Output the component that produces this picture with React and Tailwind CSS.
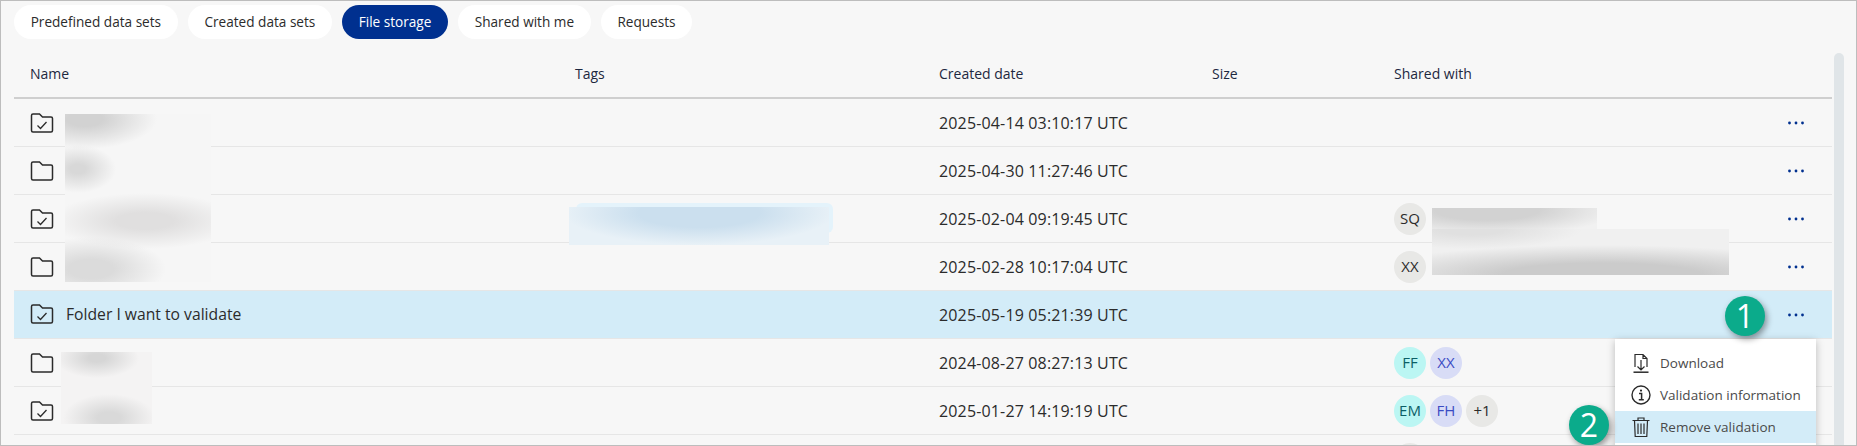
const tabs = ["Predefined data sets", "Created data sets", "File storage", "Shared with me", "Requests"];

const rows = [
  { folder: "check", date: "2025-04-14 03:10:17 UTC" },
  { folder: "plain", date: "2025-04-30 11:27:46 UTC" },
  { folder: "check", date: "2025-02-04 09:19:45 UTC", users: [["SQ", "gray"]] },
  { folder: "plain", date: "2025-02-28 10:17:04 UTC", users: [["XX", "gray"]] },
  { folder: "check", name: "Folder I want to validate", date: "2025-05-19 05:21:39 UTC", active: true },
  { folder: "plain", date: "2024-08-27 08:27:13 UTC", users: [["FF", "teal"], ["XX", "violet"]] },
  { folder: "check", date: "2025-01-27 14:19:19 UTC", users: [["EM", "teal"], ["FH", "violet"], ["+1", "gray"]] },
  { folder: "plain", date: "", users: [["", "gray"]] },
];

const avatarColors = {
  gray: "bg-[#e8e8e6] text-[#2b2b2b]",
  teal: "bg-[#bbf6f3] text-[#0b5f66]",
  violet: "bg-[#d8dcf6] text-[#3a4bc4]",
};

const cols = "grid grid-cols-[545px_364px_273px_182px_1fr]";

function FolderIcon({ type }) {
  return (
    <svg width="24" height="20" viewBox="0 0 24 20" fill="none" stroke="#2b2b2b" strokeWidth="1.5" className="shrink-0">
      <path d="M3 1h6.5l3 3h8.5a1.5 1.5 0 0 1 1.5 1.5v12a1.5 1.5 0 0 1-1.5 1.5h-18a1.5 1.5 0 0 1-1.5-1.5v-15a1.5 1.5 0 0 1 1.5-1.5z" />
      {type === "check" && <path d="M7.5 12.5l3 3 6-6.5" strokeWidth="1.3" />}
    </svg>
  );
}

function Dots() {
  return (
    <svg width="16" height="4" viewBox="0 0 16 4" fill="#00308f">
      <circle cx="1.5" cy="2" r="1.4" />
      <circle cx="8" cy="2" r="1.4" />
      <circle cx="14.5" cy="2" r="1.4" />
    </svg>
  );
}

function Row({ row }) {
  return (
    <div className={`${cols} h-12 shrink-0 items-center border-b border-[#e6e6e6] text-[#2b2b2b] ${row.active ? "bg-[#d3ecf8]" : ""}`}>
      <div className="flex items-center gap-3 pl-4">
        <FolderIcon type={row.folder} />
        {row.name && <span className="text-[15.7px]">{row.name}</span>}
      </div>
      <div />
      <div className="pl-4 text-[16px] tracking-[0.15px]">{row.date}</div>
      <div />
      <div className="flex items-center justify-between pl-4 pr-7">
        <div className="flex gap-1">
          {(row.users || []).map(([label, color], i) => (
            <span key={i} className={`flex h-8 w-8 items-center justify-center rounded-full text-[15px] ${avatarColors[color]}`}>{label}</span>
          ))}
        </div>
        <Dots />
      </div>
    </div>
  );
}

function Callout({ className, children }) {
  return (
    <div className={`absolute flex h-10 w-10 items-center justify-center rounded-full bg-[#0bab8b] text-[32px] text-white shadow-[2px_3px_6px_rgba(0,0,0,0.4)] ${className}`}>
      {children}
    </div>
  );
}

function MenuItem({ icon, label, active }) {
  return (
    <div className={`flex h-8 items-center gap-[9px] pl-4 text-[13.5px] text-[#4a4a4a] ${active ? "bg-[#d3ecf8]" : ""}`}>
      <span className="flex w-[20px] justify-center">{icon}</span>
      {label}
    </div>
  );
}

export default function App() {
  return (
    <div className="relative flex h-[446px] gap-[2px] overflow-hidden border border-[#bdbdbd] bg-[#f7f7f7] pl-[13px] pr-3 pt-1 font-['Open_Sans',sans-serif]">
      <div className="min-w-0 flex-1">
        <div className="flex gap-[10px]">
          {tabs.map((t) => (
            <div key={t} className={`flex h-[34px] items-center rounded-full px-[16.7px] text-[13.6px] ${t === "File storage" ? "bg-[#00308f] text-white" : "bg-white text-[#2b2b2b]"}`}>
              {t}
            </div>
          ))}
        </div>

        <div className={`${cols} mt-[11px] h-[49px] items-center border-b-2 border-[#cfcfcf] text-[14px] text-[#1d2840]`}>
          <div className="pl-4">Name</div>
          <div className="pl-4">Tags</div>
          <div className="pl-4">Created date</div>
          <div className="pl-4">Size</div>
          <div className="pl-4">Shared with</div>
        </div>

        {rows.map((r, i) => (
          <Row key={i} row={r} />
        ))}
      </div>

      <div className="mt-12 w-[10px] rounded-t-full bg-[#e0e5e8]" />

      {/* blurred-out bits of the screenshot, they sit over the table */}
      <div className="absolute left-[64px] top-[113px] h-[168px] w-[146px] bg-[#f6f6f6] bg-[radial-gradient(ellipse_72px_30px_at_20px_5px,#d2d2d2_25%,#d2d2d200),radial-gradient(ellipse_38px_24px_at_13px_55px,#d8d8d8_20%,#d8d8d800),radial-gradient(ellipse_95px_28px_at_80px_107px,#e0dfdf_30%,#e0dfdf00),radial-gradient(ellipse_75px_32px_at_26px_155px,#dbdbdb_30%,#dbdbdb00)]" />
      <div className="absolute left-[60px] top-[351px] h-[72px] w-[91px] bg-[#f4f3f3] bg-[radial-gradient(ellipse_42px_20px_at_36px_6px,#d6d6d6_20%,#d6d6d600),radial-gradient(ellipse_46px_24px_at_48px_66px,#d9d9d9_25%,#d9d9d900)]" />
      <div className="absolute left-[575px] top-[202px] h-[30px] w-[257px] rounded-md bg-[#e4f3fb]" />
      <div className="absolute left-[568px] top-[206px] h-[38px] w-[260px] bg-[#e8f1f7] bg-[radial-gradient(ellipse_135px_32px_at_130px_6px,#cbdfee_45%,#cbdfee00)]" />
      <div className="absolute left-[1431px] top-[207px] h-[21px] w-[165px] bg-[#f1f1f1] bg-[radial-gradient(ellipse_130px_26px_at_55px_2px,#d2d2d2_40%,#d2d2d200)]" />
      <div className="absolute left-[1431px] top-[228px] h-[46px] w-[297px] bg-[#f0f0f0] bg-[radial-gradient(ellipse_250px_30px_at_170px_46px,#cbcbcb_40%,#cbcbcb00),radial-gradient(ellipse_110px_20px_at_40px_0px,#e0e0e0_30%,#e0e0e000)]" />

      <div className="absolute left-[1614px] top-[338px] h-[120px] w-[201px] bg-white pt-2 shadow-[0_2px_8px_rgba(0,0,0,0.25)]">
        <MenuItem
          label="Download"
          icon={
            <svg width="16" height="20" viewBox="0 0 16 20" fill="none" stroke="#2b2b2b" strokeWidth="1.2">
              <path d="M2 14V1.5h8l4 4V14M10 1.5v4h4M8 7v10M4.5 13.5L8 17l3.5-3.5" />
              <path d="M0.5 19.2h15" strokeWidth="1.5" />
            </svg>
          }
        />
        <MenuItem
          label="Validation information"
          icon={
            <svg width="20" height="20" viewBox="0 0 20 20" fill="none" stroke="#2b2b2b" strokeWidth="1.4">
              <circle cx="10" cy="10" r="9" />
              <path d="M8 8.5h2.6v6M7.8 14.8h5" strokeWidth="1.5" />
              <circle cx="10" cy="5.6" r="1.1" fill="#2b2b2b" stroke="none" />
            </svg>
          }
        />
        <MenuItem
          active
          label="Remove validation"
          icon={
            <svg width="18" height="20" viewBox="0 0 18 20" fill="none" stroke="#2b2b2b" strokeWidth="1.2">
              <path d="M0.5 3.5h17M6 3.5V1h6v2.5M2.5 3.5l.7 16h11.6l.7-16M6 6.5v10.5M9 6.5v10.5M12 6.5v10.5" />
            </svg>
          }
        />
      </div>

      <Callout className="left-[1724px] top-[295px]">1</Callout>
      <Callout className="left-[1568px] top-[404px]">2</Callout>
    </div>
  );
}
